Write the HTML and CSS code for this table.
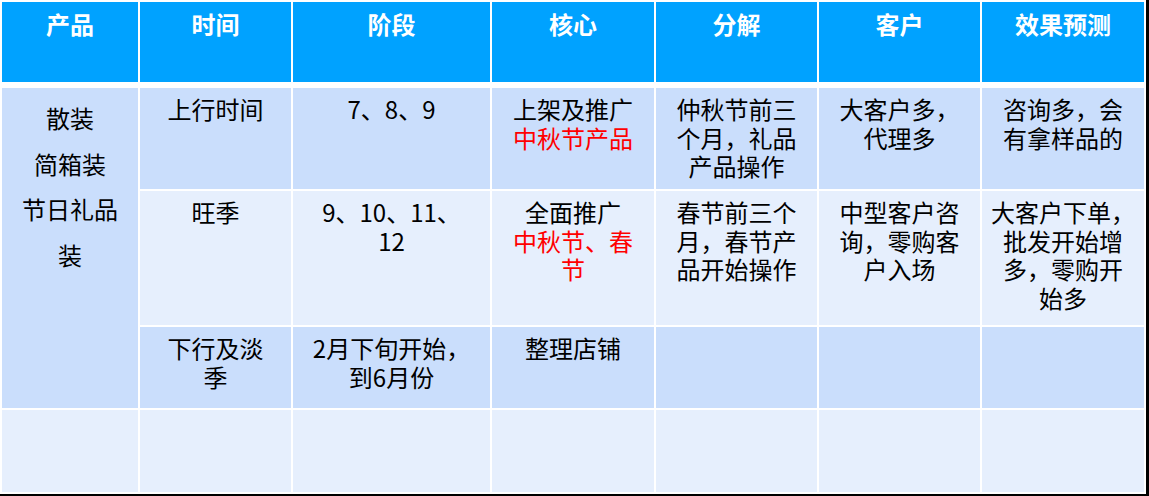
FILE: index.html
```html
<!DOCTYPE html>
<html lang="zh-CN">
<head>
<meta charset="utf-8">
<title>产品阶段</title>
<link rel="stylesheet" href="styles.css">
</head>
<body>
<div class="frame">
  <div class="sheet">
    <div class="head">
      <div class="hc">产品</div>
      <div class="hc">时间</div>
      <div class="hc">阶段</div>
      <div class="hc">核心</div>
      <div class="hc">分解</div>
      <div class="hc">客户</div>
      <div class="hc">效果预测</div>
    </div>
    <div class="body">
      <div class="c dark prod">散装<br>简箱装<br>节日礼品<br>装</div>

      <div class="c dark">上行时间</div>
      <div class="c dark">7、8、9</div>
      <div class="c dark">上架及推广<br><span class="red">中秋节产品</span></div>
      <div class="c dark">仲秋节前三<br>个月，礼品<br>产品操作</div>
      <div class="c dark">大客户多，<br>代理多</div>
      <div class="c dark">咨询多，会<br>有拿样品的</div>

      <div class="c light">旺季</div>
      <div class="c light">9、10、11、<br>12</div>
      <div class="c light">全面推广<br><span class="red">中秋节、春<br>节</span></div>
      <div class="c light">春节前三个<br>月，春节产<br>品开始操作</div>
      <div class="c light">中型客户咨<br>询，零购客<br>户入场</div>
      <div class="c light">大客户下单，<br>批发开始增<br>多，零购开<br>始多</div>

      <div class="c dark">下行及淡<br>季</div>
      <div class="c dark">2月下旬开始，<br>到6月份</div>
      <div class="c dark">整理店铺</div>
      <div class="c dark"></div>
      <div class="c dark"></div>
      <div class="c dark"></div>

      <div class="c light"></div>
      <div class="c light"></div>
      <div class="c light"></div>
      <div class="c light"></div>
      <div class="c light"></div>
      <div class="c light"></div>
      <div class="c light"></div>
    </div>
  </div>
</div>
</body>
</html>
```
FILE: styles.css
```css
html, body {
  margin: 0;
  padding: 0;
  background: #ffffff;
}

body {
  font-family: "Noto Sans CJK SC", "Noto Sans", sans-serif;
  font-size: 24px;
  color: #000000;
}

.frame {
  width: 1146px;
  height: 494px;
  border-right: 3px solid #000000;
  border-bottom: 2px solid #000000;
  background: #ffffff;
}

.sheet {
  padding: 2px 0 0 2px;
}

.head,
.body {
  display: grid;
  grid-template-columns: 136px 151px 197px 162px 161px 161px 162px;
  column-gap: 2px;
}

.head {
  grid-template-rows: 80px;
  margin-bottom: 6px;
}

.body {
  grid-template-rows: 101px 134px 81px 82px;
  row-gap: 2px;
}

.hc {
  background: #00a2ff;
  color: #ffffff;
  font-weight: 700;
  text-align: center;
  line-height: 28px;
  padding-top: 8px;
  box-sizing: border-box;
}

.c {
  text-align: center;
  line-height: 28.5px;
  padding-top: 7px;
  box-sizing: border-box;
  white-space: nowrap;
}

.dark {
  background: #cadefc;
}

.light {
  background: #e6effd;
}

.prod {
  grid-row: 1 / span 3;
  line-height: 45.5px;
  padding-top: 7px;
}

.red {
  color: #ff0000;
}
```
